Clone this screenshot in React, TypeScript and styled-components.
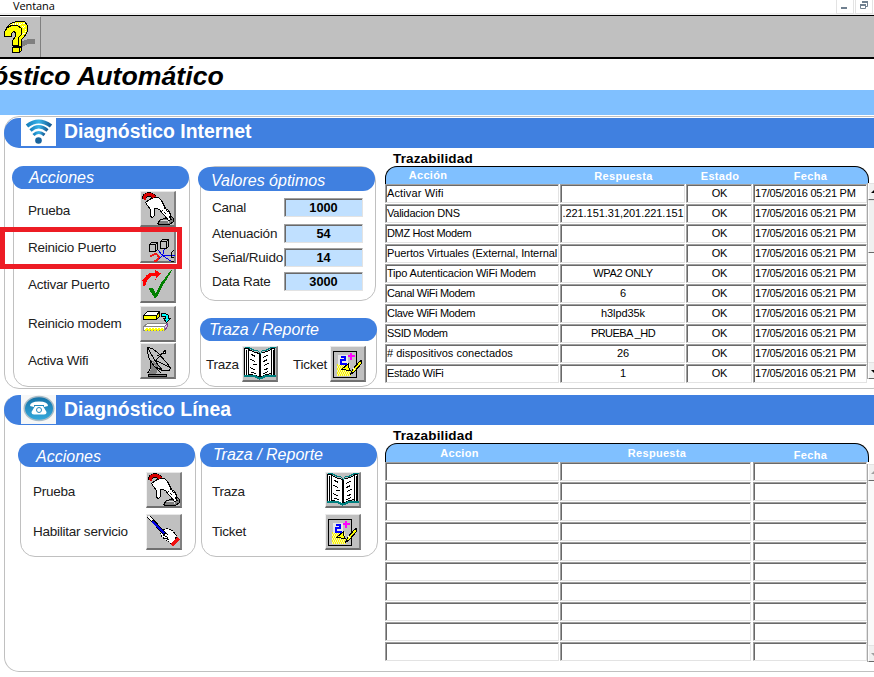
import React from "react";
import styled, { createGlobalStyle } from "styled-components";

const GlobalStyle = createGlobalStyle`
  body { margin: 0; background: #fff; overflow: hidden; }
  * { box-sizing: border-box; }
`;

const BLUE = "#4080e0";
const SKY = "#80c0ff";
const LINE = "#c0c0c0";

const Page = styled.div`
  width: 874px;
  height: 677px;
  overflow: hidden;
  background: #fff;
  color: #000;
  font-family: "Liberation Sans", Arial, sans-serif;
  white-space: nowrap;
`;

const MenuBar = styled.div`
  display: flex;
  height: 15px;
  border-bottom: 2px solid #f2f2f2;
  justify-content: space-between;
`;
const MenuItem = styled.div`
  padding-left: 13px;
  font: 11px/11px "Open Sans", "Noto Sans", sans-serif;
  letter-spacing: -0.1px;
  height: 13px;
`;
const WindowButtons = styled.div`
  display: flex;
  gap: 1px;
  margin-right: 1px;
`;
const WindowButton = styled.div`
  width: 18px;
  height: 14px;
  border: 1px solid #e3e3e3;
  border-top: 0;
  svg { display: block; }
`;

const ToolBar = styled.div`
  height: 44px;
  background: ${LINE};
  border-top: 1px solid #000;
  border-bottom: 2px solid #000;
`;
const HelpButton = styled.div`
  width: 41px;
  height: 41px;
  border-top: 1px solid #fff;
  border-right: 1px solid #808080;
  svg { display: block; }
`;

const PageTitle = styled.div`
  height: 31px;
  padding-top: 1px;
  margin-left: -8px;
  font: italic bold 26.7px/32px "Liberation Sans", Arial, sans-serif;
`;
const Band = styled.div`
  height: 25px;
  background: ${SKY};
`;

const Section = styled.section<{ $top: number; $height: number; $line: string }>`
  width: 884px;
  height: ${(p) => p.$height}px;
  margin: ${(p) => p.$top}px 0 0 4px;
  border: 1px solid ${LINE};
  border-top-color: ${(p) => p.$line};
  border-radius: 15px;
`;
const SectionHeader = styled.header<{ $top: number }>`
  display: flex;
  height: 30px;
  width: 884px;
  margin: ${(p) => p.$top}px 0 0 -1px;
  padding-left: 17px;
  border-radius: 15px;
  background: ${BLUE};
  color: #fff;
`;
const SectionIcon = styled.div`
  width: 35px;
  height: 28px;
  background: #fff;
  svg { display: block; }
`;
const SectionTitle = styled.h2<{ $line: number }>`
  margin: 0 0 0 8px;
  font-size: 19.4px;
  line-height: ${(p) => p.$line}px;
`;
const Columns = styled.div<{ $left: number }>`
  display: flex;
  align-items: flex-start;
  padding-left: ${(p) => p.$left}px;
`;
const Stack = styled.div<{ $left: number }>`
  display: flex;
  flex-direction: column;
  gap: 17px;
  width: 177px;
  margin: 18px 0 0 ${(p) => p.$left}px;
`;

const Panel = styled.div<{ $height: number; $width: number }>`
  width: ${(p) => p.$width}px;
  height: ${(p) => p.$height}px;
  border: 1px solid ${LINE};
  border-radius: 15px;
`;
const PanelTitle = styled.div<{ $shift?: number; $h?: number; $pad: number; $up?: number; $line?: number }>`
  width: 177px;
  height: ${(p) => p.$h ?? 24}px;
  margin: ${(p) => p.$up ?? -1}px 0 0 ${(p) => -(p.$shift ?? 2)}px;
  padding-left: ${(p) => p.$pad}px;
  border-radius: 12px;
  background: ${BLUE};
  color: #fff;
  font-size: 16px;
  font-style: italic;
  line-height: ${(p) => p.$line ?? p.$h ?? 24}px;
`;
const ActionRow = styled.div<{ $gap: number; $left: number; $right: number }>`
  display: flex;
  align-items: center;
  justify-content: space-between;
  height: 36px;
  margin: ${(p) => p.$gap}px ${(p) => p.$right}px 0 ${(p) => p.$left}px;
  font-size: 13.5px;
  letter-spacing: -0.24px;
  color: #202020;
`;
const ActionLabel = styled.span<{ $down?: number }>`
  margin-top: ${(p) => p.$down ?? 0}px;
`;
const IconButton = styled.span`
  width: 36px;
  height: 36px;
  flex: none;
  background: ${LINE};
  border: solid;
  border-width: 1px 2px 2px 1px;
  border-color: #e8e8e8 #808080 #707070 #f2f2f2;
  svg { display: block; margin: -1px; }
`;
const ValueRow = styled.div<{ $gap: number }>`
  display: flex;
  justify-content: space-between;
  align-items: center;
  height: 19px;
  margin: ${(p) => p.$gap}px 12px 0 11px;
  font-size: 13.5px;
  letter-spacing: -0.24px;
  line-height: 21px;
  color: #202020;
`;
const ValueField = styled.span`
  width: 79px;
  height: 19px;
  border: 1px solid #e3e3e3;
  border-top-color: #a0a0a0;
  border-left-color: #a0a0a0;
  box-shadow: inset 1px 1px #696969;
  background: #c0e0ff;
  color: #000;
  text-align: center;
  letter-spacing: 0;
  font-size: 12.8px;
  font-weight: bold;
  line-height: 18px;
`;
const ReportRow = styled.div`
  display: flex;
  align-items: center;
  height: 36px;
  margin: 5px 0 0 5px;
  font-size: 13.5px;
  letter-spacing: -0.24px;
  color: #202020;
`;
const ReportLabel = styled.span<{ $width: number; $pad?: number }>`
  width: ${(p) => p.$width}px;
  padding-left: ${(p) => p.$pad ?? 0}px;
`;

const TableArea = styled.div<{ $left: number }>`
  width: 490px;
  margin-left: ${(p) => p.$left}px;
`;
const TableTitle = styled.div`
  height: 18px;
  padding-left: 8px;
  font-size: 13.5px;
  font-weight: bold;
  letter-spacing: 0.15px;
  line-height: 21px;
`;
const TableHead = styled.div<{ $cols: string; $h: number }>`
  display: grid;
  grid-template-columns: ${(p) => p.$cols};
  column-gap: 1px;
  width: 484px;
  height: ${(p) => p.$h}px;
  border: 1px solid #000;
  border-bottom: 0;
  border-radius: 12px 14px 0 0;
  background: ${SKY};
  color: #fff;
  font-size: 11px;
  font-weight: bold;
  letter-spacing: 0.3px;
  text-align: center;
`;
const HeadCell = styled.div<{ $down: number; $right?: number }>`
  padding: ${(p) => p.$down}px ${(p) => p.$right ?? 0}px 0 0;
  line-height: 15px;
`;
const TableBody = styled.div`
  display: flex;
`;
const Rows = styled.div`
  display: flex;
  flex-direction: column;
  gap: 1px;
  width: 483px;
`;
const Row = styled.div<{ $cols: string }>`
  display: grid;
  grid-template-columns: ${(p) => p.$cols};
  column-gap: 1px;
  height: 19px;
`;
const Cell = styled.div<{ $center?: boolean; $ls?: number; $trim?: boolean }>`
  height: 19px;
  margin-right: ${(p) => (p.$trim ? 1 : 0)}px;
  overflow: hidden;
  border: 1px solid #e3e3e3;
  border-top-color: #a0a0a0;
  border-left-color: #a0a0a0;
  box-shadow: inset 1px 1px #696969;
  padding-left: 1px;
  font-size: 11px;
  line-height: 17px;
  letter-spacing: ${(p) => p.$ls ?? 0}px;
  text-align: ${(p) => (p.$center ? "center" : "left")};
`;
const ScrollBar = styled.div<{ $top: number; $height: number }>`
  display: flex;
  flex-direction: column;
  width: 16px;
  height: ${(p) => p.$height}px;
  margin-top: ${(p) => p.$top}px;
  background: #fafafa;
  border-left: 1px solid #a8a8a8;
`;
const ScrollPart = styled.div<{ $h: number; $push?: boolean }>`
  height: ${(p) => p.$h}px;
  margin-top: ${(p) => (p.$push ? "auto" : "0")};
  background: #f0f0f0;
  border-top: 1px solid #e3e3e3;
  border-left: 1px solid #fff;
  border-bottom: 1px solid #696969;
  svg { display: block; }
`;

const HighlightAnchor = styled.div`
  position: relative;
`;
const Highlight = styled.div`
  position: absolute;
  z-index: 2;
  left: -14px;
  top: 0;
  width: 182px;
  height: 42px;
  border: 5px solid #ed1c24;
`;

const Art = ({ children, w = 36, h = 36 }: { children: React.ReactNode; w?: number; h?: number }) => (
  <svg width={w} height={h} viewBox={`0 0 ${w} ${h}`} fill="none" stroke="#000" strokeWidth="1" shapeRendering="crispEdges">
    <g transform="translate(.5 .5)">{children}</g>
  </svg>
);

const HandIcon = () => (
  <Art>
    <path d="M17 32L20 28L25 27L29 28V26L31 25L33 27V30L29 33H19Z" fill="#808080" />
    <path d="M20 29H27L29 32" stroke="#e0e0e0" />
    <path d="M5 11L9 8L13 6L18 6L21 9L23 13L25 17L28 19L30 23L29 26L31 28L28 29L24 24L22 22L19 18L16 17L14 17V24L12 26L10 25V18L7 14Z" fill="#fff" />
    <path d="M24 17L29 21M22 19L27 24" strokeDasharray="1 1" />
    <path d="M3.500 8Q4 3 8 3Q12 3 14 6" stroke="#000" strokeWidth="4.500" />
    <path d="M3.500 8Q4 3 8 3Q12 3 14 6" stroke="#d80000" strokeWidth="3" />
  </Art>
);
const NetworkIcon = () => (
  <Art>
    <path d="M22 28L17 22M22 28L24 21M22 28H34M22 28L31 34M22 28L16 34" stroke="#0000e8" />
    <path d="M9 17H15V24H9ZM9 17L11 15H17V22L15 24M15 17L17 15" />
    <path d="M20 14H26V21H20ZM20 14L22 12H28V19L26 21M26 14L28 12" />
    <path d="M33 23L31 25V30H33M31 33V34H33" />
    <path d="M10 29Q16 24 18 29Q19 32 14 34" stroke="#f01818" strokeWidth="2" />
  </Art>
);
const CheckIcon = () => (
  <Art>
    <path d="M2 19V13L6 8L10 5L14 5V2L20 6L15 12V8L11 8L7 12L5 18Z" fill="#f00" stroke="none" />
    <path d="M8 21L12 20L15 26L20 17L31 4L23 17L16 30H14Z" fill="#008000" stroke="none" />
    <path d="M20 17L31 3" stroke="#008000" />
  </Art>
);
const ModemIcon = () => (
  <Art>
    <path d="M3 9L7 5H19L16 9Z" fill="#fff" />
    <path d="M3 9H16V13H3Z" fill="#ff0" />
    <path d="M16 9L19 5V10L16 13Z" fill="#dd0" />
    <path d="M3 20L7 17H27L24 20Z" fill="#fff" stroke="#888" />
    <path d="M3 20H24V24H3Z" fill="#fff" stroke="#888" />
    <path d="M5 22H23M4 23H23" stroke="#ff0" strokeWidth="2" strokeDasharray="2 1" />
    <path d="M24 20L27 17V20L24 24" fill="#e0c0f0" stroke="#804090" />
    <path d="M21 7H25L28 9V12H30L26 16L23 12H25V10H21Z" fill="#0ff" />
  </Art>
);
const DishIcon = () => (
  <Art>
    <path d="M10 18L17 25L16 30H8L10 26Z" fill="#808080" stroke="none" />
    <path d="M10 18V25L7 30M15 24L21 30" />
    <path d="M7 4L12 5L18 10L25 18L30 24L29 27L22 27L14 23L9 16L7 9Z" fill="#c0c0c0" />
    <path d="M10 16L15 19L21 25L15 23Z" fill="#808080" stroke="none" />
    <path d="M7 4L15 18L22 27M15 17L24 8M15 17L30 24M17 12L24 9" />
    <path d="M23 8L25 7V10H23Z" fill="#eee" />
    <path d="M8 33V31H26V33Z" fill="#808080" />
  </Art>
);
const BookIcon = () => (
  <Art>
    <path d="M2 2H6V29H2ZM29 2H32V29H29Z" fill="#fff" />
    <path d="M4 3V29M31 3V29" />
    <path d="M6 3Q12 6 17 7Q23 6 29 3V27Q22 28 17 31Q12 28 6 28Z" fill="#fff" />
    <path d="M17 6V31M18 6V31" />
    <path d="M9 8L13 10M8 13L13 15M10 18H14M8 21L13 24M9 26L14 27M21 11L26 8M21 15L25 13M22 19L27 16M22 23L26 22M21 27L26 25" />
    <path d="M2 1H6L12 4H15L18 7L20 4L23 4L29 1H33" stroke="#008080" />
    <path d="M1 29H6L13 30L17 32L22 30L27 29H33M14 31H20" stroke="#008080" strokeWidth="2" />
  </Art>
);
const TicketIcon = () => (
  <Art>
    <path d="M3 5H26V31H3Z" />
    <path d="M6 17H19V29H6Z" fill="#fff6a0" stroke="none" />
    <path d="M6 18H18M7 20H19M6 22H18M7 24H20M6 26H20M7 28H20" stroke="#f4f400" strokeDasharray="1 1" strokeWidth="2" />
    <path d="M7 8H17V18H7Z" fill="#e8e8e8" stroke="none" />
    <path d="M10 10H14V13H10V17H16" stroke="#00f" strokeWidth="2" />
    <path d="M17 9.500H24M20.500 6V13" stroke="#f0f" strokeWidth="2" />
    <path d="M11 23L18 17L18 21L20 24Z" fill="#ff0" />
    <path d="M20 28L22 23L29 15L31 14V17L24 25Z" fill="#ff0" />
    <path d="M23 22L25 24" stroke="#fff" />
  </Art>
);
const PenHandIcon = () => (
  <Art>
    <path d="M14 17L20 14L26 16L30 21L29 25L26 30L20 26L15 22Z" fill="#fff" strokeDasharray="2 1" />
    <path d="M16 18L22 20M17 21L22 23M19 24L23 25" />
    <path d="M2 2L19 20" stroke="#000" strokeWidth="3.500" />
    <path d="M2 2L6 6" stroke="#fff" strokeWidth="1.500" />
    <path d="M6 7L18 19" stroke="#0000e8" strokeWidth="2" />
    <path d="M25 31L32 24" stroke="#f01010" strokeWidth="4" />
  </Art>
);

const HelpIcon = () => (
  <Art w={40} h={40}>
    <path d="M21 24L26 22L27 21H34V26H28L21 30Z" fill="#808080" stroke="none" />
    <path d="M5 12L10 6L16 4H24L27 8V14L24 19L21 22V33L19 35L15 24L18 16Z" fill="#ff0" />
    <path d="M12 6H24L25 14L21 19M10 7L20 7L24 11" stroke="#fff" strokeDasharray="1 1" />
    <path d="M4 19V14L7 10L11 8H17L21 11V17L18 20V28H12V23L15 19V15L13 14L11 16V19Z" fill="#ff0" />
    <path d="M12 30H19V35H12ZM12 30L14 29H21L19 31" fill="#ff0" />
  </Art>
);

const WifiIcon = () => (
  <svg width="35" height="28" viewBox="0 0 35 28" fill="none" strokeLinecap="butt">
    <defs>
      <linearGradient id="wifi" x1="0" x2="1">
        <stop offset="0" stopColor="#1780bd" />
        <stop offset=".5" stopColor="#38b3e8" />
        <stop offset="1" stopColor="#165a93" />
      </linearGradient>
    </defs>
    <path d="M6 8Q17.500-1 30 8" stroke="url(#wifi)" strokeWidth="4" />
    <path d="M9.500 12.500Q17.500 5 26.500 12.500" stroke="url(#wifi)" strokeWidth="3.2" />
    <path d="M12.500 17Q17.500 12 23.500 17" stroke="url(#wifi)" strokeWidth="3" />
    <circle cx="17.500" cy="22.500" r="3.300" fill="#17639c" />
  </svg>
);
const PhoneIcon = () => (
  <svg width="35" height="29" viewBox="0 0 35 29">
    <defs>
      <linearGradient id="phone" x1="0" y1="0" x2="0" y2="1">
        <stop offset="0" stopColor="#1673a8" />
        <stop offset="1" stopColor="#35a9dc" />
      </linearGradient>
    </defs>
    <rect width="35" height="29" fill="#f6f7f7" />
    <ellipse cx="18" cy="13.500" rx="15.500" ry="12.700" fill="#a9bcc7" />
    <ellipse cx="18" cy="13.500" rx="14" ry="11.300" fill="url(#phone)" />
    <path d="M9 11Q9 6.500 18 6.500Q27 6.500 27 11L23 12V10H13V12Z" fill="#fff" />
    <path d="M14 11H22L25.500 17Q25.500 19.500 23 19.500H13Q10.500 19.500 10.500 17Z" fill="#fff" />
    <circle cx="18" cy="15" r="2.500" fill="none" stroke="#2387ba" />
  </svg>
);

const Arrow = ({ color, down }: { color: string; down?: boolean }) => (
  <svg width="7" height="15" viewBox="0 0 7 15">
    <path d={down ? "M2 7H9L5.500 10.500Z" : "M2 9H9L5.500 5.500Z"} fill={color} />
  </svg>
);

const DATE = "17/05/2016 05:21 PM";
const traces: [string, string, number, number][] = [
  ["Activar Wifi", "", 0.12, 0],
  ["Validacion DNS", ".221.151.31,201.221.151", -0.25, -0.05],
  ["DMZ Host Modem", "", -0.35, 0],
  ["Puertos Virtuales (External, Internal", "", -0.09, 0],
  ["Tipo Autenticacion WiFi Modem", "WPA2 ONLY", -0.19, -0.35],
  ["Canal WiFi Modem", "6", -0.35, 0],
  ["Clave WiFi Modem", "h3lpd35k", -0.3, -0.1],
  ["SSID Modem", "PRUEBA _HD", -0.5, -0.55],
  ["# dispositivos conectados", "26", 0.02, 0],
  ["Estado WiFi", "1", -0.25, 0],
];
const netCols = "174px 125px 66px 114px";
const lineCols = "174px 192px 114px";

const actions: [string, React.FC, number, number][] = [
  ["Prueba", HandIcon, 2, 2],
  ["Reinicio Puerto", NetworkIcon, 0, 4],
  ["Activar Puerto", CheckIcon, 4, -2],
  ["Reinicio modem", ModemIcon, 3, -2],
  ["Activa Wifi", DishIcon, 1, -2],
];
const values: [string, string, number][] = [
  ["Canal", "1000", 7],
  ["Atenuación", "54", 7],
  ["Señal/Ruido", "14", 5],
  ["Data Rate", "3000", 5],
];

export default function App() {
  return (
    <Page>
      <GlobalStyle />
      <MenuBar>
        <MenuItem>Ventana</MenuItem>
        <WindowButtons>
          <WindowButton>
            <svg width="16" height="13"><rect x="4" y="7" width="6" height="2" fill="#708090" /></svg>
          </WindowButton>
          <WindowButton>
            <svg width="16" height="13" fill="none" stroke="#708090">
              <path d="M6.500 3V1.500H11.500V6.500H10M4.500 4V8.500H9.500V4" strokeWidth="1" />
              <path d="M6 2H12M4 5H10" strokeWidth="2" />
            </svg>
          </WindowButton>
        </WindowButtons>
      </MenuBar>
      <ToolBar>
        <HelpButton><HelpIcon /></HelpButton>
      </ToolBar>
      <PageTitle>óstico Automático</PageTitle>
      <Band />

      <Section $top={1} $height={273} $line={LINE}>
        <SectionHeader $top={1}>
          <SectionIcon><WifiIcon /></SectionIcon>
          <SectionTitle $line={27}>Diagnóstico Internet</SectionTitle>
        </SectionHeader>
        <Columns $left={8}>
          <Stack $left={0}>
            <Panel $width={177} $height={221}>
              <PanelTitle $pad={17} $h={23}>Acciones</PanelTitle>
              {actions.map(([label, Icon, gap, down]) => (
                <HighlightAnchor key={label}>
                  <ActionRow $gap={gap} $left={14} $right={13}>
                    <ActionLabel $down={down}>{label}</ActionLabel>
                    <IconButton><Icon /></IconButton>
                  </ActionRow>
                  {label === "Reinicio Puerto" && <Highlight />}
                </HighlightAnchor>
              ))}
            </Panel>
          </Stack>
          <Stack $left={10}>
            <Panel $width={176} $height={135}>
              <PanelTitle $pad={13} $up={0} $shift={3} $line={27}>Valores óptimos</PanelTitle>
              {values.map(([label, value, gap]) => (
                <ValueRow key={label} $gap={gap}>
                  <span>{label}</span>
                  <ValueField>{value}</ValueField>
                </ValueRow>
              ))}
            </Panel>
            <Panel $width={177} $height={69}>
              <PanelTitle $pad={9} $shift={1} $h={23}>Traza / Reporte</PanelTitle>
              <ReportRow>
                <ReportLabel $width={36}>Traza</ReportLabel>
                <IconButton><BookIcon /></IconButton>
                <ReportLabel $width={52} $pad={15}>Ticket</ReportLabel>
                <IconButton><TicketIcon /></IconButton>
              </ReportRow>
            </Panel>
          </Stack>
          <TableArea $left={8}>
            <TableTitle>Trazabilidad</TableTitle>
            <TableHead $cols={netCols} $h={18}>
              <HeadCell $down={1} $right={90}>Acción</HeadCell>
              <HeadCell $down={2}>Respuesta</HeadCell>
              <HeadCell $down={2}>Estado</HeadCell>
              <HeadCell $down={2} $right={1}>Fecha</HeadCell>
            </TableHead>
            <TableBody>
              <Rows>
                {traces.map(([action, answer, ls, ls2]) => (
                  <Row key={action} $cols={netCols}>
                    <Cell $ls={ls}>{action}</Cell>
                    <Cell $center $ls={ls2}>{answer}</Cell>
                    <Cell $center $ls={-0.3}>OK</Cell>
                    <Cell $ls={-0.24}>{DATE}</Cell>
                  </Row>
                ))}
              </Rows>
              <ScrollBar $top={-1} $height={196}>
                <ScrollPart $h={17}><Arrow color="#000" /></ScrollPart>
                <ScrollPart $h={53} />
                <ScrollPart $h={17} $push><Arrow color="#000" down /></ScrollPart>
              </ScrollBar>
            </TableBody>
          </TableArea>
        </Columns>
      </Section>

      <Section $top={5} $height={278} $line="transparent">
        <SectionHeader $top={0}>
          <SectionIcon><PhoneIcon /></SectionIcon>
          <SectionTitle $line={29}>Diagnóstico Línea</SectionTitle>
        </SectionHeader>
        <Columns $left={15}>
          <Stack $left={0}>
            <Panel $width={176} $height={114}>
              <PanelTitle $pad={18} $shift={3} $line={27}>Acciones</PanelTitle>
              <ActionRow $gap={5} $left={12} $right={13}>
                <ActionLabel $down={2}>Prueba</ActionLabel>
                <IconButton><HandIcon /></IconButton>
              </ActionRow>
              <ActionRow $gap={6} $left={12} $right={13}>
                <ActionLabel $down={-2}>Habilitar servicio</ActionLabel>
                <IconButton><PenHandIcon /></IconButton>
              </ActionRow>
            </Panel>
          </Stack>
          <Stack $left={4}>
            <Panel $width={177} $height={114}>
              <PanelTitle $pad={13}>Traza / Reporte</PanelTitle>
              <ActionRow $gap={5} $left={10} $right={16}>
                <ActionLabel $down={2}>Traza</ActionLabel>
                <IconButton><BookIcon /></IconButton>
              </ActionRow>
              <ActionRow $gap={6} $left={10} $right={16}>
                <ActionLabel $down={-2}>Ticket</ActionLabel>
                <IconButton><TicketIcon /></IconButton>
              </ActionRow>
            </Panel>
          </Stack>
          <TableArea $left={7}>
            <TableTitle>Trazabilidad</TableTitle>
            <TableHead $cols={lineCols} $h={19}>
              <HeadCell $down={2} $right={27}>Accion</HeadCell>
              <HeadCell $down={2}>Respuesta</HeadCell>
              <HeadCell $down={4} $right={1}>Fecha</HeadCell>
            </TableHead>
            <TableBody>
              <Rows>
                {traces.map(([key]) => (
                  <Row key={key} $cols={lineCols}>
                    <Cell />
                    <Cell $trim />
                    <Cell />
                  </Row>
                ))}
              </Rows>
              <ScrollBar $top={2} $height={198}>
                <ScrollPart $h={17}><Arrow color="#a0a0a0" /></ScrollPart>
                <ScrollPart $h={17} $push><Arrow color="#a0a0a0" down /></ScrollPart>
              </ScrollBar>
            </TableBody>
          </TableArea>
        </Columns>
      </Section>
    </Page>
  );
}
